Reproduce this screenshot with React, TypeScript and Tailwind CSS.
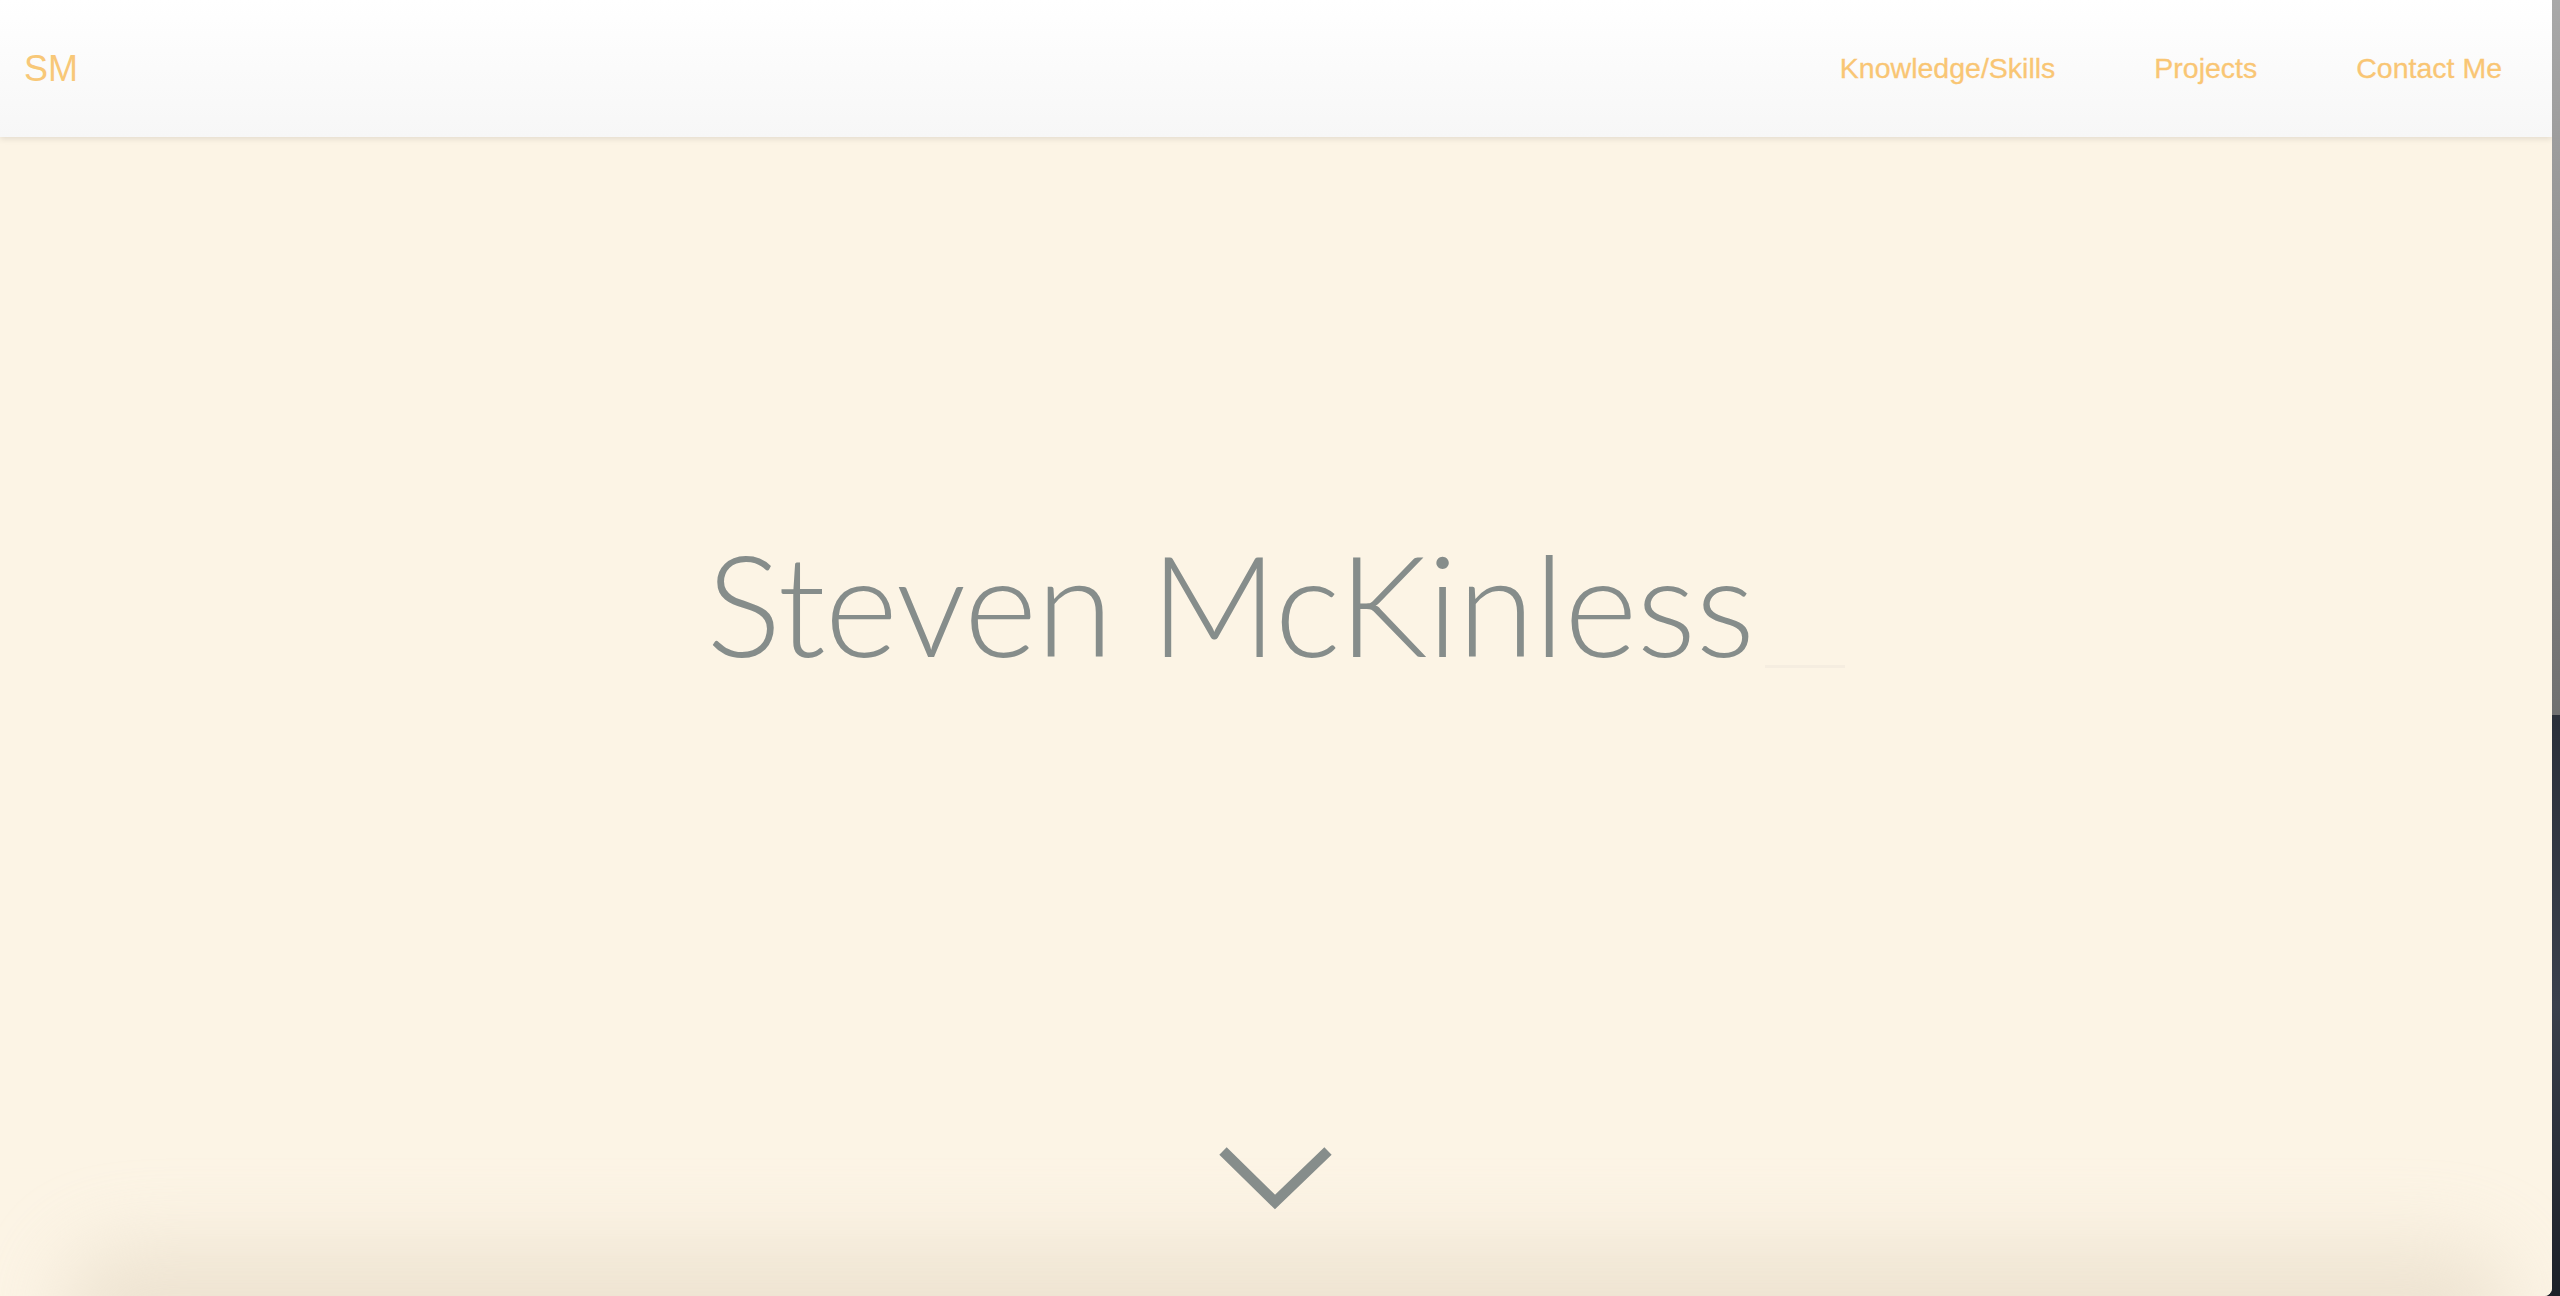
import React from "react";

export default function App() {
  return (
    <div className="flex h-[1296px] w-full overflow-hidden bg-[#1f232b]">
      <div className="relative flex h-full flex-1 flex-col overflow-hidden rounded-br-[8px] bg-[#fcf4e5]">
        <header className="relative z-10 flex h-[137px] shrink-0 items-center justify-between bg-gradient-to-b from-white to-[#f7f7f7] pl-[24px] pr-[50px] shadow-[0_2px_6px_rgba(0,0,0,0.10)] font-['Liberation_Sans',Arial,sans-serif]">
          <div className="text-[36px] leading-none text-[#f8c878]">SM</div>
          <nav className="flex items-center gap-[99px] text-[28.5px] leading-none text-[#f9c674] [-webkit-text-stroke:0.3px_#f9c674]">
            <a>Knowledge/Skills</a>
            <a>Projects</a>
            <a>Contact Me</a>
          </nav>
        </header>
        <section className="relative flex flex-1 flex-col items-center overflow-hidden bg-[#fcf4e5]">
          <div className="mt-[396px] flex items-end">
            <h1 className="text-[140px] font-light leading-none tracking-[-0.6px] text-[#868d8b] font-['Lato','Open_Sans',sans-serif]">
              Steven McKinless
            </h1>
            <span className="mb-[5px] ml-[11px] h-[3px] w-[80px] bg-[#f5ede0]" />
          </div>
          <div className="relative z-10 mt-[472px]">
            <svg width="116" height="66" viewBox="0 0 116 66">
              <polyline points="5,6 57,57 110,6" fill="none" stroke="#868d8b" strokeWidth="10.5" strokeLinecap="butt" strokeLinejoin="miter" />
            </svg>
          </div>
          <div className="pointer-events-none absolute bottom-[-80px] left-[60px] right-[40px] h-[130px] rounded-[65px] bg-[#e4d8c4] opacity-60 blur-[40px]" />
        </section>
      </div>
      <div className="flex h-full w-[8px] shrink-0 flex-col">
        <div className="h-[715px] bg-gradient-to-b from-[#a8a8a8] to-[#707070]" />
        <div className="flex-1 bg-gradient-to-b from-[#2b303a] via-[#3a404c] to-[#1c2028]" />
      </div>
    </div>
  );
}
